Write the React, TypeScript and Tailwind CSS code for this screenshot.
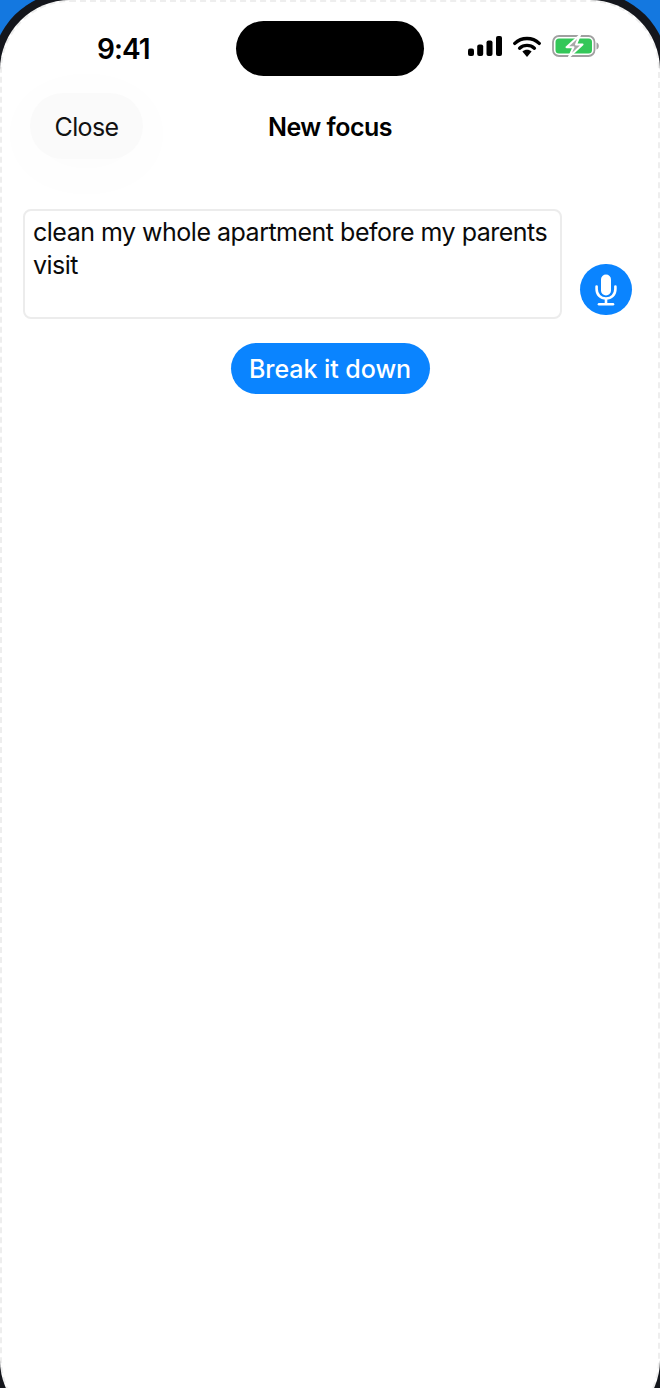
function SignalIcon() {
  return (
    <svg width="34" height="20" viewBox="0 0 34 20" fill="#000">
      <rect x="0" y="12.5" width="6" height="7.5" rx="2" />
      <rect x="9.2" y="8.5" width="6" height="11.5" rx="2" />
      <rect x="18.5" y="4.5" width="6" height="15.5" rx="2" />
      <rect x="28" y="0" width="6" height="20" rx="2" />
    </svg>
  );
}

function WifiIcon() {
  return (
    <svg width="28" height="21" viewBox="0 0 28 21" fill="none">
      <path d="M1.8 7.4C8.6 0.8 19.4 0.8 26.2 7.4" stroke="#000" strokeWidth="3.4" strokeLinecap="round" />
      <path d="M6.6 12.2C10.8 8.4 17.2 8.4 21.4 12.2" stroke="#000" strokeWidth="3.4" strokeLinecap="round" />
      <path d="M9.4 15.4C12 13.2 16 13.2 18.6 15.4L14 21Z" fill="#000" />
    </svg>
  );
}

function BatteryIcon() {
  return (
    <svg width="47" height="24" viewBox="0 0 47 24" fill="none">
      <rect x="1" y="2" width="41.5" height="20" rx="6" stroke="#a0a0a0" strokeWidth="1.8" />
      <rect x="3.5" y="4.5" width="36.5" height="15" rx="3.5" fill="#34c759" />
      <path d="M44.5 8.5C46 9 46.8 10.4 46.8 12C46.8 13.6 46 15 44.5 15.5Z" fill="#a0a0a0" />
      <path d="M28 1L14.5 13.2H21.5L17 23L30.5 10.5H24Z" fill="#a8a8a8" stroke="#fff" strokeWidth="2" strokeLinejoin="round" />
    </svg>
  );
}

function MicIcon() {
  return (
    <svg width="22" height="32" viewBox="0 0 22 32" fill="none">
      <rect x="6" y="0.5" width="10" height="21" rx="5" fill="#fff" />
      <path d="M1.6 12.5V15C1.6 20.8 5.5 24.5 11 24.5C16.5 24.5 20.4 20.8 20.4 15V12.5" stroke="#fff" strokeWidth="2.6" strokeLinecap="round" />
      <path d="M11 24.5V30" stroke="#fff" strokeWidth="2.6" />
      <path d="M4 30.2H18" stroke="#fff" strokeWidth="2.6" strokeLinecap="round" />
    </svg>
  );
}

export default function App() {
  return (
    <div className="w-[660px] h-[1388px] overflow-hidden bg-[#1478e0] font-['Inter',sans-serif] text-black">
      <div className="-mx-2 -mt-2 p-2 rounded-[78px] bg-[#14161c]">
        <div className="relative h-[1430px] rounded-[70px] bg-white border-2 border-dashed border-[#eeeeee]">
          <div className="flex items-center justify-between h-[91px] pb-[3px] pl-[95px] pr-[59px]">
            <span className="pt-[6px] text-[28px] font-semibold leading-none tracking-[-0.035em]">9:41</span>
            <div className="flex items-center gap-[11px]">
              <SignalIcon />
              <WifiIcon />
              <BatteryIcon />
            </div>
          </div>

          {/* dynamic island */}
          <div className="absolute left-[234px] top-[19px] w-[188px] h-[55px] rounded-full bg-black" />

          <div className="relative flex items-center h-[66px] pl-[28px]">
            <button className="w-[113px] h-[66px] pt-[4px] rounded-[33px] bg-[#fafafa] shadow-[0_8px_60px_16px_rgba(0,0,0,0.012)] text-[25px] text-[#111] tracking-[-0.025em]">
              Close
            </button>
            <span className="absolute inset-x-0 pt-[4px] text-center text-[25px] font-semibold tracking-[-0.02em]">New focus</span>
          </div>

          <div className="flex items-end gap-[18px] pl-[21px] mt-[50px]">
            <div className="w-[539px] h-[110px] rounded-[8px] border-2 border-[#ececec] pl-[8px] pr-[6px] py-[5px] text-[25px] leading-[33px] tracking-[-0.5px] text-[#0a0a0a]">
              clean my whole apartment before my parents visit
            </div>
            <button className="flex items-center justify-center w-[52px] h-[51px] mb-[4px] rounded-full bg-[#0a84ff]">
              <MicIcon />
            </button>
          </div>

          <div className="flex justify-center mt-[24px]">
            <button className="w-[199px] h-[51px] pt-[2px] rounded-full bg-[#0a84ff] text-white text-[25px] font-medium tracking-[-0.002em]">
              Break it down
            </button>
          </div>
        </div>
      </div>
    </div>
  );
}
